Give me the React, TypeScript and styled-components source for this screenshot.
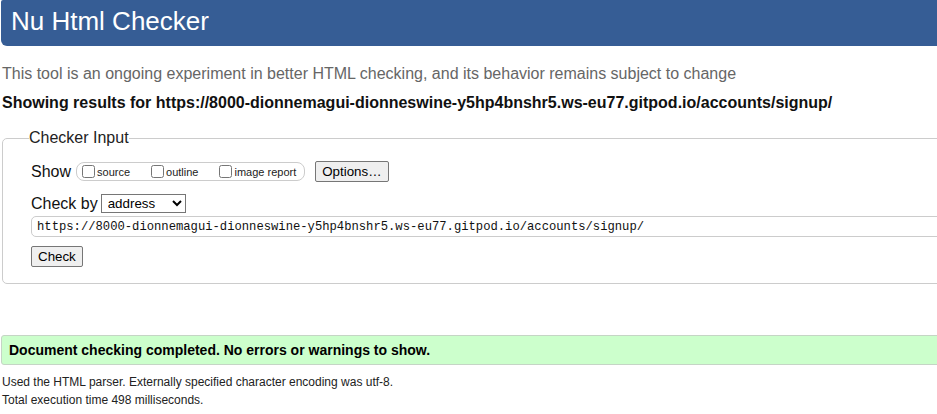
import * as React from "react";
import styled, { createGlobalStyle } from "styled-components";

const GlobalStyle = createGlobalStyle`
  html, body {
    margin: 0;
    padding: 0;
    overflow: hidden;
    background: #fff;
  }
  body {
    font-family: "Liberation Sans", Arial, sans-serif;
    color: #000;
  }
`;

const Page = styled.div`
  width: 1120px;
  padding-left: 1px;
`;

const Header = styled.h1`
  margin: 0;
  height: 46px;
  box-sizing: border-box;
  padding: 0 0 4px 10px;
  line-height: 42px;
  font-size: 26px;
  font-weight: normal;
  color: #fff;
  background: #365d95;
  border-radius: 2px 0 0 6px;
`;

const Lead = styled.p`
  margin: 19px 0 0 1px;
  font-size: 16px;
  line-height: 18px;
  color: #666;
`;

const ResultsFor = styled.p`
  margin: 11px 0 0 1px;
  font-size: 16px;
  line-height: 18px;
  font-weight: bold;
  color: #111;
`;

const InputFieldset = styled.fieldset`
  margin: 17px 0 0 1px;
  padding: 14px 0 16px 28px;
  border: 1px solid #ccc;
  border-radius: 5px;
  min-width: 0;
`;

const Legend = styled.legend`
  padding: 0;
  margin-left: -2px;
  font-size: 16px;
  line-height: 18px;
  color: #222;
`;

const Row = styled.div<{ $gap?: number }>`
  display: flex;
  align-items: center;
  margin-top: ${p => p.$gap ?? 0}px;
  font-size: 16px;
  line-height: 18px;
`;

const RowLabel = styled.span`
  margin-right: 4px;
  color: #111;
`;

const ShowGroup = styled.span`
  display: inline-flex;
  align-items: center;
  height: 19px;
  box-sizing: border-box;
  margin-left: 1px;
  padding: 0 8px 0 2px;
  border: 1px solid #ccc;
  border-radius: 8px;
`;

const Option = styled.label<{ $last?: boolean }>`
  display: inline-flex;
  align-items: center;
  margin-right: ${p => (p.$last ? 0 : 18)}px;
  font-size: 11px;
  color: #222;

  input {
    margin: 0 2px 0 3px;
    width: 13px;
    height: 13px;
  }
`;

const NativeButton = styled.button<{ $left?: number }>`
  margin-left: ${p => p.$left ?? 0}px;
  padding: 1px 6px;
  height: 21px;
  font-family: "Liberation Sans", Arial, sans-serif;
  font-size: 13.33px;
  color: #000;
  background: #efefef;
  border: 1px solid #767676;
  border-radius: 2px;
`;

const Select = styled.select`
  width: 85px;
  height: 19px;
  margin-left: -1px;
  padding: 0 2px;
  font-family: "Liberation Sans", Arial, sans-serif;
  font-size: 13.33px;
  color: #000;
  border: 1px solid #767676;
  border-radius: 0;
  background: #fff;
`;

const UrlInput = styled.input`
  display: block;
  margin-top: 3px;
  width: 1080px;
  height: 21px;
  box-sizing: border-box;
  padding: 0 5px;
  font-family: "Liberation Mono", "DejaVu Sans Mono", monospace;
  font-size: 12.2px;
  color: #111;
  border: 1px solid #ccc;
  border-radius: 5px;
  outline: none;
`;

const CheckRow = styled.div`
  margin-top: 9px;
  display: flex;
`;

const SuccessBar = styled.div`
  margin-top: 51px;
  height: 30px;
  box-sizing: border-box;
  padding-left: 7px;
  line-height: 28px;
  font-size: 14px;
  font-weight: bold;
  color: #000;
  background: #ccffcc;
  border: 1px solid #c5d5c5;
  border-radius: 3px;
`;

const Stats = styled.div`
  margin-top: 8px;
  margin-left: 1px;
  font-size: 12px;
  line-height: 18px;
  color: #222;

  p {
    margin: 0;
  }
`;

const url =
  "https://8000-dionnemagui-dionneswine-y5hp4bnshr5.ws-eu77.gitpod.io/accounts/signup/";

export default function App() {
  return (
    <Page>
      <GlobalStyle />
      <Header>Nu Html Checker</Header>
      <Lead>
        This tool is an ongoing experiment in better HTML checking, and its behavior remains
        subject to change
      </Lead>
      <ResultsFor>Showing results for {url}</ResultsFor>

      <InputFieldset>
        <Legend>Checker Input</Legend>
        <Row>
          <RowLabel>Show</RowLabel>
          <ShowGroup>
            <Option>
              <input type="checkbox" />
              source
            </Option>
            <Option>
              <input type="checkbox" />
              outline
            </Option>
            <Option $last>
              <input type="checkbox" />
              image report
            </Option>
          </ShowGroup>
          <NativeButton $left={10}>Options…</NativeButton>
        </Row>
        <Row $gap={12}>
          <RowLabel>Check by</RowLabel>
          <Select defaultValue="address">
            <option value="address">address</option>
            <option value="file">file upload</option>
            <option value="text">text input</option>
          </Select>
        </Row>
        <UrlInput type="url" defaultValue={url} />
        <CheckRow>
          <NativeButton>Check</NativeButton>
        </CheckRow>
      </InputFieldset>

      <SuccessBar>Document checking completed. No errors or warnings to show.</SuccessBar>
      <Stats>
        <p>Used the HTML parser. Externally specified character encoding was utf-8.</p>
        <p>Total execution time 498 milliseconds.</p>
      </Stats>
    </Page>
  );
}
